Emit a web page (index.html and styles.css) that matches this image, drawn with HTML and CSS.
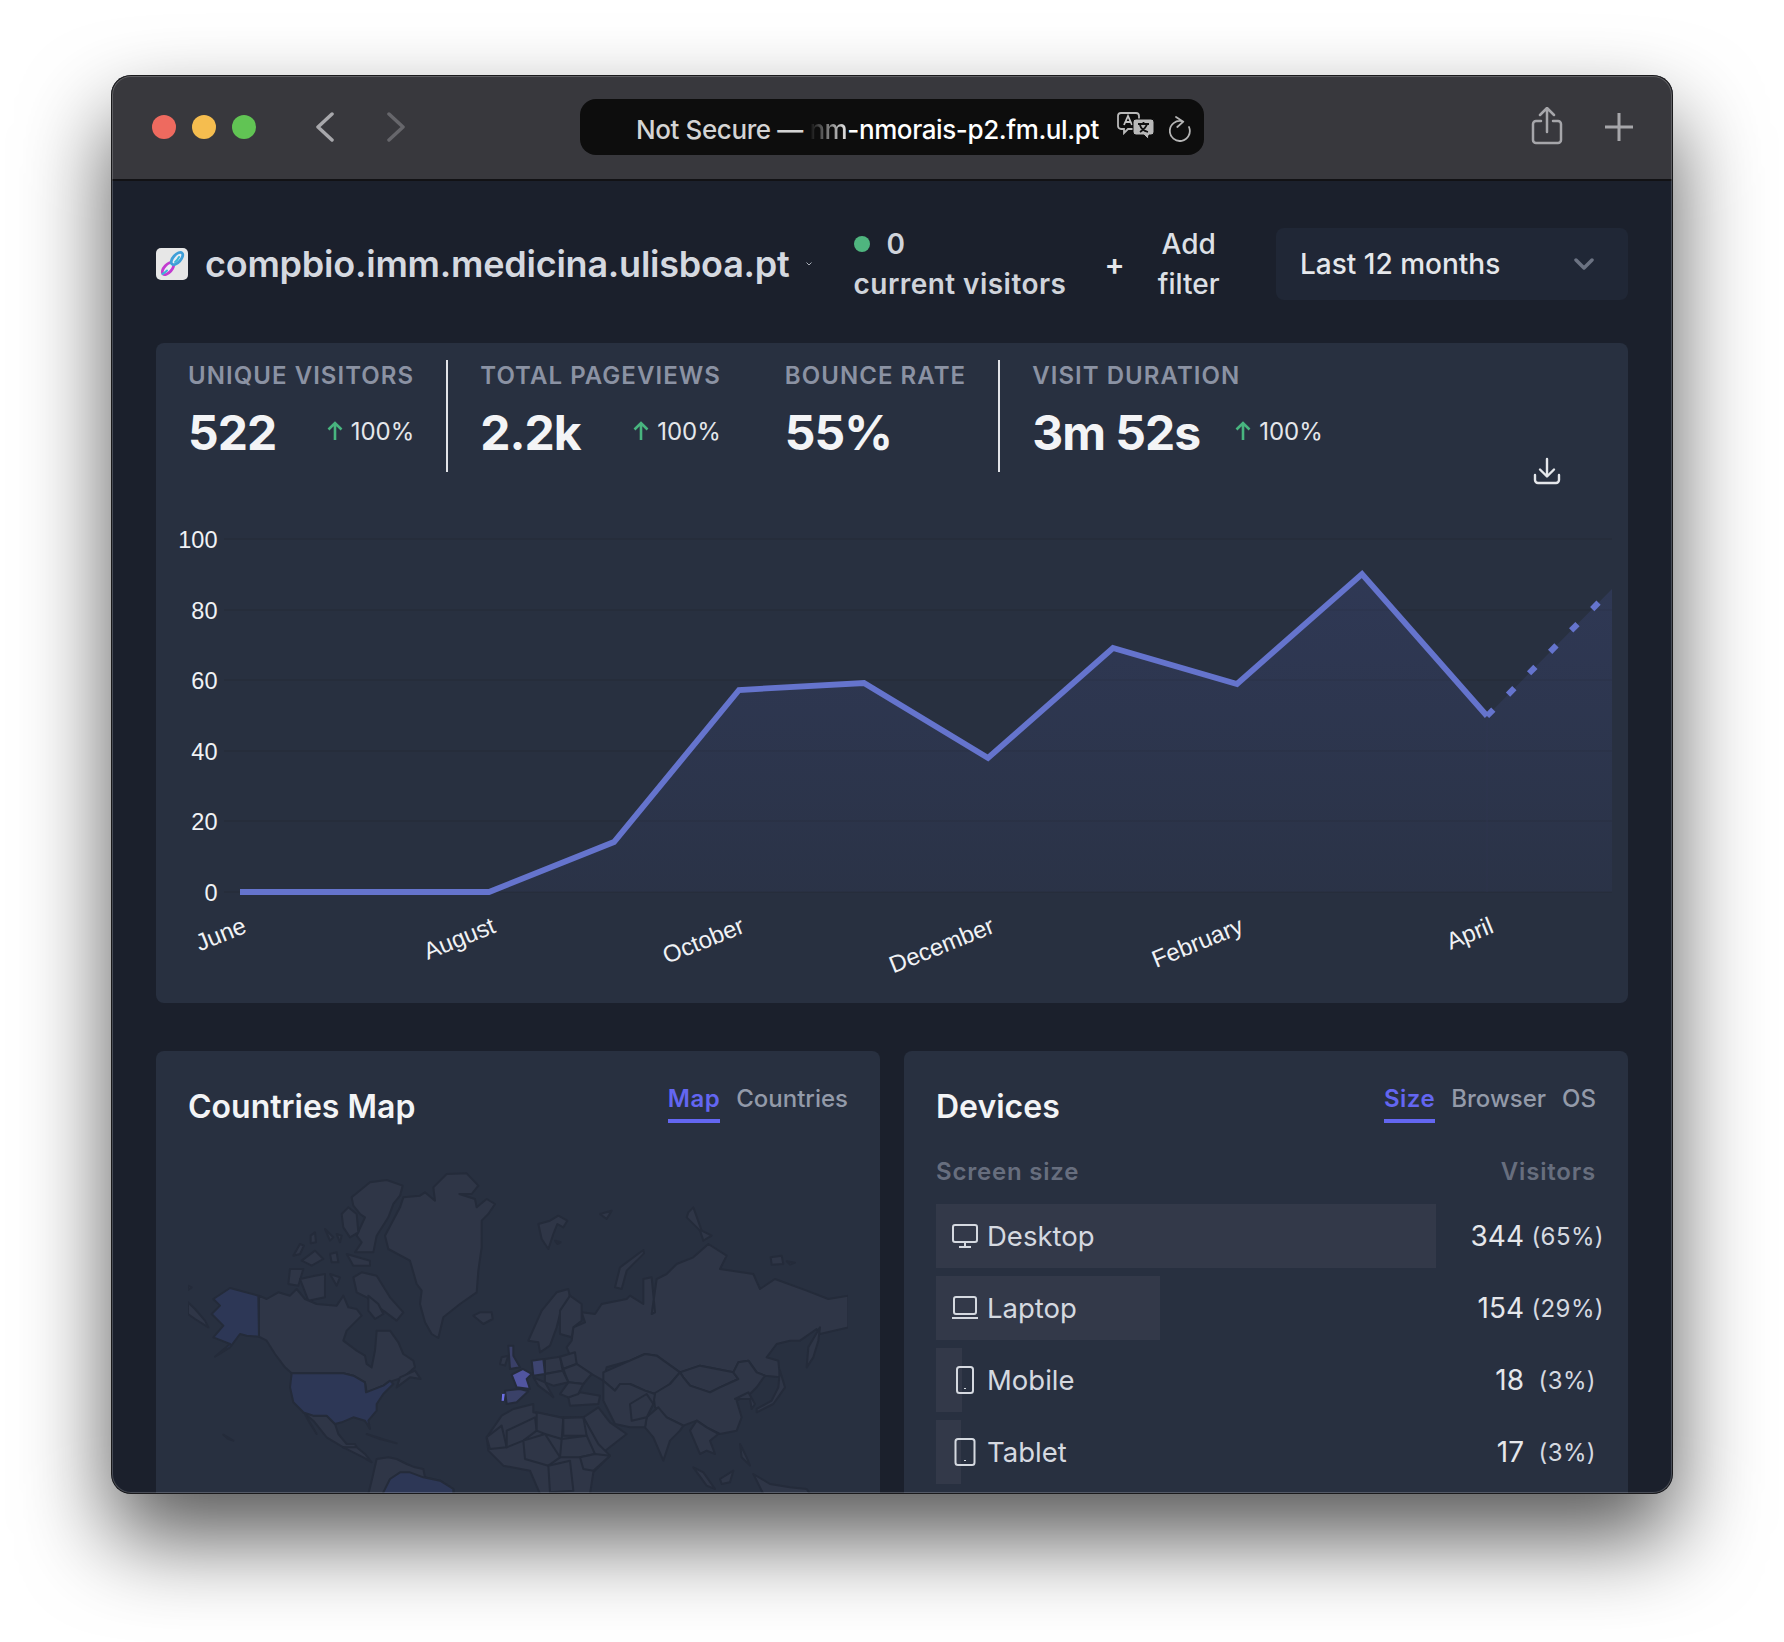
FILE: index.html
```html
<!DOCTYPE html>
<html lang="en">
<head>
<meta charset="utf-8">
<title>compbio.imm.medicina.ulisboa.pt</title>
<link rel="stylesheet" href="styles.css">
</head>
<body>
<div class="window">
  <div class="titlebar">
    <div class="lights"><i class="light red"></i><i class="light yellow"></i><i class="light green"></i></div>
    <svg class="nav back" viewBox="0 0 20 30"><path d="M17 2 3 15l14 13"/></svg>
    <svg class="nav forward" viewBox="0 0 20 30"><path d="M3 2l14 13L3 28"/></svg>
    <div class="address">
      <span class="addr-muted">Not Secure —&nbsp;</span><span class="addr-fade">nm</span><span class="addr-host">-nmorais-p2.fm.ul.pt</span>
      <svg class="translate" viewBox="0 0 38 28">
        <path class="tr-a" d="M4 1h15a3 3 0 0 1 3 3v10a3 3 0 0 1-3 3H11l-4 4v-4H4a3 3 0 0 1-3-3V4a3 3 0 0 1 3-3z"/>
        <path class="tr-glyph" d="M7 13l4-9 4 9M8.500 10h5"/>
        <path class="tr-b" d="M19 7h15a3 3 0 0 1 3 3v10a3 3 0 0 1-3 3h-2l-1 4-4-4h-8a3 3 0 0 1-3-3V10a3 3 0 0 1 3-3z"/>
        <path class="tr-x" d="M21 12h11M26.500 10v2M30 12c-1 4-4 6-7 8M23 13c1 4 4 6 8 7"/>
      </svg>
      <svg class="reload" viewBox="0 0 22 30"><path d="M13 9.200A10 10 0 1 0 20 15M7 5l7.300 4.700-6 5.300"/></svg>
    </div>
    <svg class="share" viewBox="0 0 32 38"><path d="M10 14H5a3 3 0 0 0-3 3v16a3 3 0 0 0 3 3h22a3 3 0 0 0 3-3V17a3 3 0 0 0-3-3h-5M16 25V2M9 8l7-7 7 7"/></svg>
    <svg class="newtab" viewBox="0 0 28 28"><path d="M14 0v28M0 14h28"/></svg>
  </div>

  <div class="content">
    <header class="site-header">
      <div class="favicon">
        <svg viewBox="0 0 32 32">
          <ellipse class="dna-pink" cx="12" cy="20.500" rx="7.500" ry="3.800" transform="rotate(-48 12 20.500)"/>
          <ellipse class="dna-cyan" cx="21" cy="10.500" rx="7.500" ry="3.800" transform="rotate(-48 21 10.500)"/>
          <path class="dna-rung" d="M6.500 26c2-1 3-2 4.500-3.500M19 14c1.500-1 3-3 4-5"/>
        </svg>
      </div>
      <h1 class="site-name">compbio.imm.medicina.ulisboa.pt</h1>
      <svg class="tiny-chevron" viewBox="0 0 6 4"><path d="M.5.500 3 3 5.500.500"/></svg>
      <div class="visitors">
        <div class="visitors-count"><i class="live-dot"></i><span>0</span></div>
        <div>current visitors</div>
      </div>
      <span class="filter-plus">+</span>
      <span class="filter-label">Add filter</span>
      <div class="period">
        <span>Last 12 months</span>
        <svg class="period-chevron" viewBox="0 0 20 14"><path d="M2 3l8 8 8-8"/></svg>
      </div>
    </header>

    <section class="card chart-card">
      <div class="stats">
        <div class="stat divided">
          <div class="stat-label">UNIQUE VISITORS</div>
          <div class="stat-row"><b class="stat-value">522</b><span class="delta"><svg class="arrow" viewBox="0 0 18 20"><path d="M9 19V2M2.500 8.500 9 2l6.500 6.500"/></svg>100%</span></div>
        </div>
        <div class="stat">
          <div class="stat-label">TOTAL PAGEVIEWS</div>
          <div class="stat-row"><b class="stat-value">2.2k</b><span class="delta"><svg class="arrow" viewBox="0 0 18 20"><path d="M9 19V2M2.500 8.500 9 2l6.500 6.500"/></svg>100%</span></div>
        </div>
        <div class="stat divided">
          <div class="stat-label">BOUNCE RATE</div>
          <div class="stat-row"><b class="stat-value">55%</b></div>
        </div>
        <div class="stat">
          <div class="stat-label">VISIT DURATION</div>
          <div class="stat-row"><b class="stat-value">3m 52s</b><span class="delta"><svg class="arrow" viewBox="0 0 18 20"><path d="M9 19V2M2.500 8.500 9 2l6.500 6.500"/></svg>100%</span></div>
        </div>
      </div>
      <svg class="download" viewBox="0 0 28 28"><path d="M2 18v5a3 3 0 0 0 3 3h18a3 3 0 0 0 3-3v-5M14 2v17M7 12.500l7 7 7-7"/></svg>
      <svg class="chart" viewBox="156 480 1472 524">
        <defs>
          <linearGradient id="area" x1="0" y1="575" x2="0" y2="893" gradientUnits="userSpaceOnUse">
            <stop offset="0" stop-color="#505fb4" stop-opacity=".18"/>
            <stop offset="1" stop-color="#505fb4" stop-opacity=".06"/>
          </linearGradient>
        </defs>
        <path class="grid" d="M224 540H1612M224 611H1612M224 681H1612M224 752H1612M224 822H1612M224 893H1612"/>
        <path class="grid-v" d="M1487 717V893"/>
        <path fill="url(#area)" d="M240 893H489L614 843 739 691 864 684 988 759 1113 649 1237 685 1362 575 1487 717 1612 590V893Z"/>
        <path class="line" d="M240 893H489L614 843 739 691 864 684 988 759 1113 649 1237 685 1362 575 1487 717"/>
        <path class="line dashed" d="M1487 717 1612 590"/>
        <g class="y-labels">
          <text x="217.500" y="549">100</text>
          <text x="217.500" y="620">80</text>
          <text x="217.500" y="690">60</text>
          <text x="217.500" y="761">40</text>
          <text x="217.500" y="831">20</text>
          <text x="217.500" y="902">0</text>
        </g>
        <g class="x-labels">
          <text transform="translate(248 933) rotate(-22)">June</text>
          <text transform="translate(497 933) rotate(-22)">August</text>
          <text transform="translate(746 933) rotate(-22)">October</text>
          <text transform="translate(996 933) rotate(-22)">December</text>
          <text transform="translate(1245 933) rotate(-22)">February</text>
          <text transform="translate(1495 933) rotate(-22)">April</text>
        </g>
      </svg>
    </section>

    <div class="panels">
      <section class="card panel">
        <div class="panel-head">
          <h2 class="panel-title">Countries Map</h2>
          <div class="tabs"><span class="tab active">Map</span><span class="tab">Countries</span></div>
        </div>
        <svg class="map" viewBox="188 1165 660 329">
          <g transform="translate(180 1165) scale(.33333)">
            <g class="land">
              <polygon points="760,70 800,30 860,28 895,65 875,90 838,90 885,105 890,130 920,105 945,120 925,150 905,170 905,250 895,320 890,385 840,420 790,460 775,522 755,510 735,475 720,420 725,380 710,360 690,290 625,255 615,215 660,130 670,100 720,95 735,85 765,110"/>
              <polygon points="515,100 570,55 620,48 668,65 660,95 640,120 625,160 590,215 580,265 525,265 545,235 530,215 555,160 540,150 520,125"/>
              <polygon points="485,150 505,130 530,150 535,205 510,220 490,190"/>
              <polygon points="340,275 360,240 372,245 360,270"/>
              <polygon points="392,215 405,205 408,235 392,238"/>
              <polygon points="435,195 460,220 450,230"/>
              <polygon points="470,210 485,215 480,235"/>
              <polygon points="365,290 405,260 430,285 395,305"/>
              <polygon points="450,270 470,265 475,295 455,295"/>
              <polygon points="500,270 570,290 570,305 520,305"/>
              <polygon points="325,360 330,315 370,315 355,365"/>
              <polygon points="360,345 405,335 435,330 435,400 385,410"/>
              <polygon points="520,340 545,325 590,335 630,400 670,445 650,470 610,440 560,400 530,385"/>
              <polygon points="450,330 480,340 470,365"/>
              <polygon points="237,395 260,405 295,385 330,395 350,375 375,405 410,420 470,425 490,395 505,430 530,435 545,455 500,500 490,530 530,560 555,575 560,600 575,610 585,560 590,500 630,500 655,535 670,570 700,590 705,610 670,640 640,650 610,665 560,685 555,655 520,635 490,628 335,628 315,610 285,570 260,530 237,518"/>
              <polygon points="565,395 595,420 610,450 585,465 565,440"/>
              <polygon points="660,640 705,620 722,645 690,640 650,670"/>
              <polygon points="24,415 45,435 75,470 85,490 45,465 24,450"/>
              <polygon points="24,365 35,370 24,378"/>
              <polygon points="370,745 400,755 440,755 465,780 475,810 500,840 525,840 530,850 510,855 490,850 440,820 400,770"/>
              <polygon points="375,750 410,810 385,770"/>
              <polygon points="490,850 530,850 555,870 575,895 550,880"/>
              <polygon points="560,810 650,838 600,825"/>
              <polygon points="880,455 900,445 935,445 938,465 910,480"/>
              <polygon points="130,812 160,830 145,825"/>
              <polygon points="575,950 590,885 625,880 650,885 680,900 705,910 730,915 735,940 780,950 820,975 820,990 565,990"/>
            </g>
            <g class="land usa">
              <polygon points="150,372 235,395 237,518 200,515 180,510 150,550 105,578 150,540 125,530 100,520 130,485 95,450 120,425 100,405"/>
              <polygon points="335,628 490,628 520,635 555,655 558,685 610,665 630,650 640,660 610,690 590,720 590,740 565,770 570,795 555,770 520,760 485,775 465,780 440,755 400,755 370,745 340,715 330,670"/>
              <polygon points="610,985 630,945 660,925 690,925 730,940 780,950 820,975 820,990 610,990"/>
            </g>
          </g>
          <g transform="translate(470 1165) scale(.33333)">
            <g class="land">
              <polygon points="305,530 310,490 345,475 335,445 375,450 395,420 470,405 480,395 520,420 520,345 545,340 555,445 545,450 560,345 590,330 620,300 670,280 715,240 770,275 750,315 850,330 870,375 915,345 1010,380 1075,405 1135,395 1135,490 1050,510 1040,495 990,530 960,530 920,540 890,580 925,590 930,640 885,635 860,625 835,590 805,595 790,625 740,615 690,605 630,625 580,590 560,575 525,570 480,590 410,610 400,650 365,630 320,600 300,575 290,550"/>
              <polygon points="400,625 480,590 525,570 560,575 630,625 600,660 555,690 525,680 480,660 450,660 435,680 400,650"/>
              <polygon points="630,625 690,605 740,615 790,625 805,645 750,670 720,685 660,665 640,640"/>
              <polygon points="600,660 630,625 640,640 660,665 720,685 750,670 805,645 790,625 805,595 835,590 860,625 885,635 860,670 840,690 800,710 815,760 800,800 750,810 710,790 680,770 640,785 590,760 555,730 550,690"/>
              <polygon points="530,760 565,730 590,760 640,785 630,800 600,830 580,890 550,820 525,790"/>
              <polygon points="680,770 710,790 745,810 720,830 735,870 710,860 690,870 660,800"/>
              <polygon points="400,650 435,680 450,660 480,660 525,680 555,690 550,720 530,760 525,790 480,790 435,780 400,710"/>
              <polygon points="480,720 530,690 550,720 530,760 485,770"/>
              <polygon points="340,760 385,730 420,775 470,810 400,865 380,840"/>
              <polygon points="295,700 330,685 390,695 385,720 300,725"/>
              <polygon points="175,530 215,440 260,385 295,375 300,400 270,450 260,490 240,545 210,565 205,535"/>
              <polygon points="305,520 270,510 270,440 300,395 335,420 335,470 310,490"/>
              <polygon points="205,180 240,170 265,155 292,170 280,190 262,180 250,210 235,255 215,225"/>
              <polygon points="255,230 272,235 262,240"/>
              <polygon points="390,150 425,140 410,165"/>
              <polygon points="655,145 670,130 695,200 725,215 700,230 690,200 650,160"/>
              <polygon points="435,370 450,310 520,258 522,268 470,320 455,375"/>
              <polygon points="902,280 935,275 940,300 905,302"/>
              <polygon points="950,292 975,296 960,302"/>
              <polygon points="95,580 115,575 105,605 90,600"/>
              <polygon points="225,585 270,578 278,620 225,630"/>
              <polygon points="270,578 315,565 320,600 280,615"/>
              <polygon points="280,615 320,600 365,630 340,660 295,655"/>
              <polygon points="225,630 278,620 295,655 250,665 225,655"/>
              <polygon points="295,655 340,660 325,690 295,700 270,690"/>
              <polygon points="190,640 225,655 250,700 232,685 205,665"/>
              <polygon points="50,820 95,755 130,735 190,720 190,745 270,760 340,760 385,840 420,875 370,925 360,990 210,990 180,920 100,905 55,860"/>
              <polygon points="50,820 95,785 110,850 60,855"/>
              <polygon points="110,800 195,760 200,800 160,830 110,850"/>
              <polygon points="200,745 280,762 275,825 225,810 200,800"/>
              <polygon points="280,762 340,760 350,815 280,815"/>
              <polygon points="275,825 350,815 375,870 330,880 270,880"/>
              <polygon points="160,830 225,810 270,880 235,905 165,885"/>
              <polygon points="330,880 375,870 420,875 370,920 340,915"/>
              <polygon points="235,905 300,890 310,980 240,985"/>
              <polygon points="860,745 910,720 945,670 930,620 925,670 905,710 860,735"/>
              <polygon points="1010,610 1015,550 1050,490 1045,530 1030,580"/>
              <polygon points="795,705 835,685 855,720 845,735 840,705"/>
              <polygon points="670,910 700,925 735,975 710,965"/>
              <polygon points="750,945 790,920 780,955 755,960"/>
              <polygon points="810,840 830,880 840,905 815,880"/>
              <polygon points="850,930 900,960 960,970 1010,975 1020,990 880,990"/>
            </g>
            <g class="land usa">
              <polygon class="c-uk" points="115,545 130,545 130,575 150,610 120,615"/>
              <polygon class="c-de" points="185,590 220,585 225,630 190,635"/>
              <polygon class="c-fr" points="125,632 158,615 185,630 170,645 180,675 140,670"/>
              <polygon class="c-es" points="105,680 150,675 175,682 140,715 110,720"/>
              <polygon class="c-pt" points="95,688 106,688 103,712 93,712"/>
            </g>
          </g>
        </svg>
      </section>
      <section class="card panel">
        <div class="panel-head">
          <h2 class="panel-title">Devices</h2>
          <div class="tabs"><span class="tab active">Size</span><span class="tab">Browser</span><span class="tab">OS</span></div>
        </div>
        <div class="table-head"><span>Screen size</span><span>Visitors</span></div>
        <div class="rows">
          <div class="row">
            <div class="row-main"><i class="bar" style="width:500px"></i>
              <svg class="dev" viewBox="0 0 28 28"><rect x="2" y="3" width="24" height="17" rx="2"/><path d="M14 20v5M8 25h12"/></svg><span class="dev-name">Desktop</span></div>
            <span class="count">344</span><span class="pct wide">(65%)</span>
          </div>
          <div class="row">
            <div class="row-main"><i class="bar" style="width:224px"></i>
              <svg class="dev" viewBox="0 0 28 28"><rect x="3" y="3" width="22" height="17" rx="2"/><path d="M1 24h26"/></svg><span class="dev-name">Laptop</span></div>
            <span class="count">154</span><span class="pct wide">(29%)</span>
          </div>
          <div class="row">
            <div class="row-main"><i class="bar" style="width:26px"></i>
              <svg class="dev" viewBox="0 0 28 28"><rect x="6" y="1" width="16" height="26" rx="2.500"/><path d="M14 22v1"/></svg><span class="dev-name">Mobile</span></div>
            <span class="count">18</span><span class="pct">(3%)</span>
          </div>
          <div class="row">
            <div class="row-main"><i class="bar" style="width:25px"></i>
              <svg class="dev" viewBox="0 0 28 28"><rect x="4.500" y="1" width="19" height="26" rx="2.500"/><path d="M14 22v1"/></svg><span class="dev-name">Tablet</span></div>
            <span class="count">17</span><span class="pct">(3%)</span>
          </div>
        </div>
      </section>
    </div>
  </div>
</div>
</body>
</html>
```
FILE: styles.css
```css
* { box-sizing: border-box; }
html, body { margin: 0; height: 1642px; overflow: hidden; background: #fff; }
body { padding: 75px 111px 0; font-family: Inter, "Noto Sans", sans-serif; }

.window {
  position: relative;
  width: 1562px;
  height: 1419px;
  border-radius: 20px;
  overflow: hidden;
  background: #1b202c;
}
body::before {
  content: "";
  position: absolute;
  left: 111px;
  top: 75px;
  width: 1562px;
  height: 1419px;
  border-radius: 20px;
  box-shadow: 0 44px 88px rgba(0, 0, 0, .66);
}
.window::after {
  content: "";
  position: absolute;
  inset: 0;
  border-radius: 20px;
  box-shadow: inset 0 0 0 1px #1a1a1c, inset 0 0 0 2px rgba(255, 255, 255, .2);
  pointer-events: none;
}

/* title bar */
.titlebar {
  display: flex;
  align-items: center;
  height: 106px;
  padding-left: 41px;
  background: #38383d;
  border-bottom: 2px solid #121215;
}
.lights { display: flex; gap: 16px; }
.light { width: 24px; height: 24px; border-radius: 50%; }
.red { background: #ee6a5f; }
.yellow { background: #f5bd4f; }
.green { background: #61c454; }
.nav { width: 20px; height: 30px; fill: none; stroke-width: 3.500; stroke-linecap: round; stroke-linejoin: round; }
.back { margin-left: 59px; stroke: #a8a8ac; }
.forward { margin-left: 51px; stroke: #66666b; }
.address {
  display: flex;
  align-items: center;
  width: 624px;
  height: 56px;
  margin-left: 174px;
  padding: 4px 0 0 56px;
  background: #0d0d0d;
  border-radius: 16px;
  font-size: 26px;
  font-weight: 500;
  white-space: nowrap;
  letter-spacing: -.4px;
}
.addr-muted { color: #d4d4d4; }
.addr-fade {
  background: linear-gradient(90deg, rgba(255,255,255,0), rgba(255,255,255,.9));
  -webkit-background-clip: text;
  background-clip: text;
  color: transparent;
}
.addr-host { color: #fff; }
.translate { width: 38px; height: 28px; margin: -6px 0 0 18px; flex: none; }
.tr-a { fill: #0d0d0d; stroke: #b9b9b9; stroke-width: 1.800; }
.tr-b { fill: #b9b9b9; stroke: #0d0d0d; stroke-width: 1; }
.tr-glyph { fill: none; stroke: #c4c4c4; stroke-width: 1.800; }
.tr-x { fill: none; stroke: #111; stroke-width: 1.800; }
.reload { width: 22px; height: 30px; margin: -4px 0 0 14px; flex: none; fill: none; stroke: #b5b5b5; stroke-width: 1.800; stroke-linecap: round; stroke-linejoin: round; }
.share { width: 32px; height: 38px; margin-left: 327px; margin-top: -2px; fill: none; stroke: #a6a6aa; stroke-width: 2.500; stroke-linecap: round; stroke-linejoin: round; }
.newtab { width: 28px; height: 28px; margin-left: 42px; fill: none; stroke: #a6a6aa; stroke-width: 3; }

/* page */
.content { padding: 43px 45px 0; }
.site-header { display: flex; align-items: center; height: 80px; margin-bottom: 39px; }
.favicon { width: 32px; height: 32px; border-radius: 5px; background: #e7e7e7; flex: none; }
.favicon svg { display: block; width: 32px; height: 32px; }
.dna-pink { fill: #e9ecf4; stroke: #c23ccf; stroke-width: 2.800; }
.dna-cyan { fill: #e9ecf4; stroke: #3f9fd8; stroke-width: 2.800; }
.dna-rung { fill: none; stroke: #39b6d6; stroke-width: 2; stroke-linecap: round; }
.site-name { margin: 0 0 0 17px; font-size: 36px; line-height: 44px; font-weight: 600; letter-spacing: -.23px; color: #d5d9e0; white-space: nowrap; }
.tiny-chevron { width: 6px; height: 4px; margin-left: 16px; fill: none; stroke: #a9aeb8; stroke-width: 1; flex: none; }
.visitors { margin-left: 42px; width: 214px; font-size: 28px; line-height: 40px; font-weight: 600; letter-spacing: .45px; color: #d0d4db; white-space: nowrap; }
.visitors-count { display: flex; align-items: center; gap: 17px; }
.live-dot { width: 16px; height: 16px; border-radius: 50%; background: #4fb57f; }
.filter-plus { margin-left: 37px; font-size: 30px; font-weight: 600; color: #e5e7eb; line-height: 40px; }
.filter-label { margin-left: 32px; width: 64px; font-size: 28px; line-height: 40px; font-weight: 500; color: #dde0e6; text-align: center; }
.period {
  display: flex;
  align-items: center;
  justify-content: space-between;
  width: 352px;
  height: 72px;
  margin-left: auto;
  padding: 0 34px 0 24px;
  background: #202736;
  border-radius: 8px;
  font-size: 28px;
  font-weight: 500;
  color: #e5e7eb;
}
.period-chevron { width: 20px; height: 14px; fill: none; stroke: #6c7383; stroke-width: 3.500; stroke-linecap: round; stroke-linejoin: round; }

.card { position: relative; background: #283040; border-radius: 8px; }
.chart-card { height: 660px; padding-top: 17px; margin-bottom: 48px; }
.stats { display: flex; height: 112px; }
.stat { padding: 0 32px; }
.stat.divided { border-right: 2px solid #e2e4e8; }
.stat-label { height: 32px; font-size: 24px; line-height: 32px; font-weight: 600; letter-spacing: 1.05px; color: #8b92a3; white-space: nowrap; }
.stat-row { display: flex; align-items: center; justify-content: space-between; gap: 34px; height: 64px; margin-top: 9px; }
.stat-value { font-size: 48px; line-height: 64px; font-weight: 700; letter-spacing: -1px; color: #f3f4f6; white-space: nowrap; }
.delta { display: flex; align-items: center; gap: 7px; font-size: 24px; color: #e5e7eb; white-space: nowrap; margin-top: -4px; }
.arrow { width: 18px; height: 20px; fill: none; stroke: #48b57f; stroke-width: 2.600; }
.download { position: absolute; top: 114px; right: 67px; width: 28px; height: 28px; fill: none; stroke: #e5e7eb; stroke-width: 2.400; stroke-linecap: round; stroke-linejoin: round; }
.chart { display: block; width: 1472px; height: 524px; margin-top: 7px; }
.grid { fill: none; stroke: #262c3a; stroke-width: 1.500; }
.grid-v { fill: none; stroke: #2a3145; stroke-width: 1; }
.line { fill: none; stroke: #6574cd; stroke-width: 5.800; stroke-linejoin: miter; }
.line.dashed { stroke-width: 6; stroke-dasharray: 9 21; }
.y-labels text { font-family: "Liberation Sans", Arial, sans-serif; font-size: 23.500px; fill: #f0f2f5; text-anchor: end; }
.x-labels text { font-family: "Liberation Sans", Arial, sans-serif; font-size: 24px; fill: #f0f2f5; text-anchor: end; }

.panels { display: grid; grid-template-columns: 724px 724px; gap: 24px; }
.panel { height: 500px; padding: 32px 32px 0; }
.panel-head { display: flex; justify-content: space-between; align-items: flex-start; height: 72px; }
.panel-title { margin: 0; font-size: 32px; line-height: 48px; font-weight: 600; color: #f3f4f6; }
.tabs { display: flex; gap: 16px; }
.tab { height: 40px; font-size: 24px; line-height: 32px; font-weight: 500; color: #939aa9; }
.tab.active { color: #6366f1; font-weight: 600; letter-spacing: .5px; border-bottom: 4px solid #6366f1; }
.map { display: block; width: 660px; height: 329px; margin-top: 9px; }
.land polygon { fill: #2f3647; stroke: #242b3a; stroke-width: 6; stroke-linejoin: round; }
.usa polygon { fill: #2d3756; }
.usa .c-uk { fill: #3a4068; }
.usa .c-de { fill: #3d4470; }
.usa .c-fr { fill: #5155a0; }
.usa .c-es { fill: #3a4168; }
.usa .c-pt { fill: #6c6fe5; stroke-width: 3; }

.table-head { display: flex; justify-content: space-between; height: 32px; margin: 1px 0 16px; font-size: 24px; line-height: 32px; font-weight: 600; letter-spacing: .8px; color: #676e7e; }
.rows { display: flex; flex-direction: column; gap: 8px; }
.row { display: flex; align-items: center; height: 64px; }
.row-main { position: relative; display: flex; align-items: center; flex: 1; height: 64px; padding-left: 15px; }
.bar { position: absolute; left: 0; top: 0; bottom: 0; background: #333949; }
.dev { position: relative; width: 28px; height: 28px; fill: none; stroke: #d5d9e0; stroke-width: 2; stroke-linejoin: round; }
.dev-name { position: relative; margin-left: 8px; font-size: 27.500px; color: #d5d9e0; }
.count { font-size: 28px; color: #e5e7eb; }
.pct { width: 72px; text-align: right; font-size: 24px; letter-spacing: .4px; color: #d5d9e0; }
.pct.wide { width: 80px; margin-right: -8px; }
```
